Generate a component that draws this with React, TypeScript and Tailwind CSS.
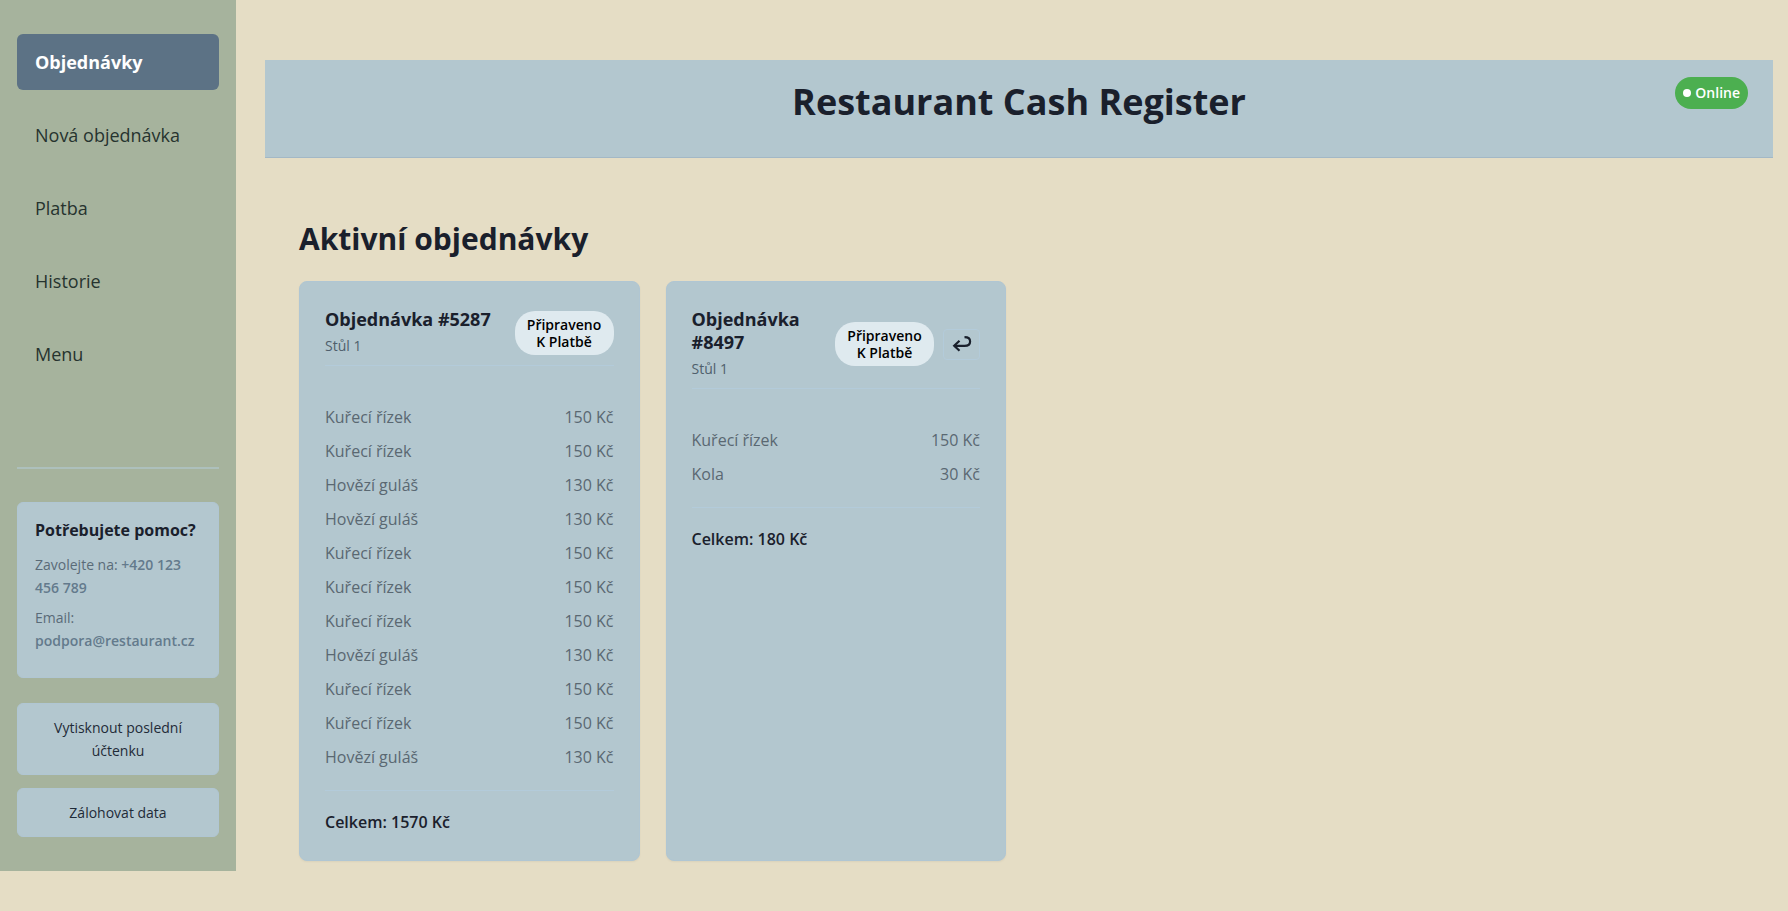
const NAV = ["Nová objednávka", "Platba", "Historie", "Menu"];

type Item = [string, number];
type Order = { id: number; table: string; items: Item[]; returnable: boolean };

const SCHNITZEL: Item = ["Kuřecí řízek", 150];
const GOULASH: Item = ["Hovězí guláš", 130];
const COLA: Item = ["Kola", 30];

const ORDERS: Order[] = [
  {
    id: 5287,
    table: "Stůl 1",
    returnable: false,
    items: [
      SCHNITZEL, SCHNITZEL, GOULASH, GOULASH, SCHNITZEL, SCHNITZEL,
      SCHNITZEL, GOULASH, SCHNITZEL, SCHNITZEL, GOULASH,
    ],
  },
  { id: 8497, table: "Stůl 1", returnable: true, items: [SCHNITZEL, COLA] },
];

function Sidebar() {
  const action =
    "w-full cursor-pointer rounded-md border border-[#b0c6d3] bg-[#b3c7cf] px-4 py-3 text-sm leading-[23px] text-[#1f2b38]";
  return (
    <aside className="w-[236px] shrink-0 bg-[#a6b39d] px-[17px] py-[34px]">
      <nav className="flex flex-col gap-[17px]">
        <a href="#objednavky" aria-current="page" className="rounded-md bg-[#5c7285] px-[18px] py-4 text-lg leading-6 font-bold text-white">
          Objednávky
        </a>
        {NAV.map((label) => (
          <a key={label} href={"#" + label} className="rounded-md px-[18px] py-4 text-lg leading-6 text-[#26332f]">
            {label}
          </a>
        ))}
      </nav>
      <div className="mt-[85px] border-t-2 border-[#adc0bc] pt-[33px]">
        <section className="mb-[25px] rounded-md border border-[#b0c6d3] bg-[#b3c7cf] px-[17px] pt-[15px] pb-[25px]">
          <h2 className="mb-[11px] text-base leading-6 font-bold text-[#1a202c]">Potřebujete pomoc?</h2>
          <p className="mb-[7px] text-sm leading-[23px] text-[#5a6b78]">
            Zavolejte na: <a href="tel:+420123456789" className="font-semibold text-[#637a8c]">+420 123 456 789</a>
          </p>
          <p className="text-sm leading-[23px] text-[#5a6b78]">
            Email: <a href="mailto:podpora@restaurant.cz" className="font-semibold text-[#637a8c]">podpora@restaurant.cz</a>
          </p>
        </section>
        <div className="flex flex-col gap-[13px]">
          <button type="button" className={action}>Vytisknout poslední účtenku</button>
          <button type="button" className={action}>Zálohovat data</button>
        </div>
      </div>
    </aside>
  );
}

function OrderCard({ order }: { order: Order }) {
  const total = order.items.reduce((sum, item) => sum + item[1], 0);
  return (
    <article className="rounded-lg border border-[#b0c6d3] bg-[#b3c7cf] px-[25px] pt-[26px] pb-6 shadow-xs">
      <header className="flex items-center gap-[9px] border-b border-[#b3cbda] pb-2">
        <div className="min-w-0 flex-1">
          <h3 className="text-lg leading-[23px] font-bold text-[#1a202c]">Objednávka #{order.id}</h3>
          <p className="pt-1 text-sm leading-[22px] font-medium text-[#4f5f6c]">{order.table}</p>
        </div>
        <span className="w-[99px] shrink-0 rounded-[20px] bg-[#dfeaef] px-2 py-[5px] text-center text-sm leading-[17px] font-semibold text-black">
          Připraveno K Platbě
        </span>
        {order.returnable && (
          <button type="button" aria-label="Vrátit objednávku" className="flex h-[31px] w-[37px] shrink-0 cursor-pointer items-center justify-center rounded border border-[#b3cbda] text-[#1a202c]">
            <svg width="20" height="18" viewBox="0 0 20 18" fill="none" stroke="currentColor" strokeWidth="2.2">
              <path d="M12.500 2.200c3.800 0 5.600 1.700 5.600 4.200c0 2.800-2 4.400-5.600 4.400H2.500" />
              <path d="M7.500 5.800 2.200 10.800l5.300 5" />
            </svg>
          </button>
        )}
      </header>
      <ul className="border-b border-[#b3cbda] pt-[34px] pb-4">
        {order.items.map(([name, price], i) => (
          <li key={i} className="flex justify-between leading-[34px] text-[#5a6872]">
            <span>{name}</span>
            <span>{price} Kč</span>
          </li>
        ))}
      </ul>
      <p className="pt-[17px] leading-7 font-semibold text-[#1a202c]">Celkem: {total} Kč</p>
    </article>
  );
}

export default function App() {
  return (
    <div className="flex min-h-screen items-start bg-[#e5ddc5] font-['Open_Sans','Noto_Sans',sans-serif]">
      <Sidebar />
      <main className="min-w-0 flex-1 pt-[60px] pr-[15px] pb-[50px] pl-[29px]">
        <header className="relative border-b border-[#a3b8c6] bg-[#b3c7cf] px-[25px] pt-[17px] pb-[30px]">
          <h1 className="text-center text-4xl leading-[50px] font-bold text-[#1a202c]">Restaurant Cash Register</h1>
          <span className="absolute top-[17px] right-[25px] flex h-8 items-center gap-1 rounded-full bg-[#4caf50] px-2 text-sm font-semibold text-white">
            <span className="size-2 rounded-full bg-white" />
            Online
          </span>
        </header>
        <section className="px-[34px] pt-[60px]">
          <h2 className="mb-[21px] text-3xl leading-[42px] font-bold text-[#1a202c]">Aktivní objednávky</h2>
          <div className="grid grid-cols-4 gap-[26px]">
            {ORDERS.map((order) => (
              <OrderCard key={order.id} order={order} />
            ))}
          </div>
        </section>
      </main>
    </div>
  );
}
